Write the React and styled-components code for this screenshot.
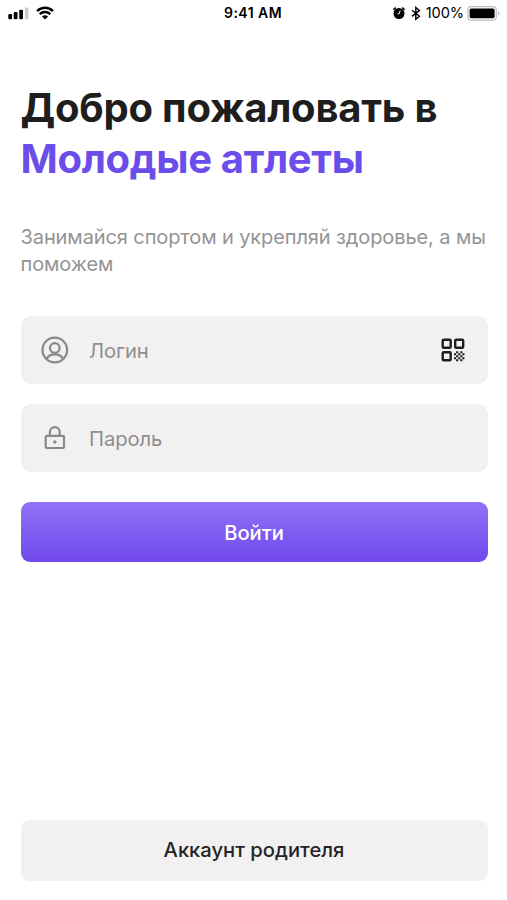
import React from "react";
import styled, { createGlobalStyle } from "styled-components";

const GlobalStyle = createGlobalStyle`
  *, *::before, *::after { box-sizing: border-box; }
  body { margin: 0; background: #fff; }
  button, input { font-family: inherit; }
`;

const Screen = styled.main`
  display: flex;
  flex-direction: column;
  height: 900px;
  padding: 0 19.5px 19.5px 20.5px;
  background: #fff;
  color: #1e1e1e;
  font-family: Inter, "Liberation Sans", sans-serif;
`;

const StatusBar = styled.header`
  display: grid;
  grid-template-columns: 1fr auto 1fr;
  align-items: center;
  height: 26px;
  margin: 0 -12px 0 -13px;
  color: #000;
`;

const StatusGroup = styled.div`
  display: flex;
  align-items: center;
  justify-content: ${(p) => (p.$end ? "flex-end" : "flex-start")};
  gap: ${(p) => p.$gap}px;
  height: 26px;

  svg { flex: none; display: block; }
`;

const Clock = styled.time`
  margin-left: -1px;
  font-size: 14px;
  font-weight: 600;
  line-height: 26px;
  letter-spacing: 0.45px;
`;

const Charge = styled.span`
  margin: 0 -2px 0 0;
  font-size: 14.6px;
  line-height: 26px;
  letter-spacing: -0.1px;
`;

const Title = styled.h1`
  margin: 56px 0 0;
  font-size: 40px;
  font-weight: 700;
  line-height: 51px;
  white-space: nowrap;
`;

const TitleLine = styled.span`
  display: block;
  width: max-content;
  color: ${(p) => (p.$accent ? "#6b4eea" : "#1e1e1e")};
  letter-spacing: ${(p) => p.$tracking};
`;

const Intro = styled.p`
  margin: 40px -10px 0 0;
  color: #949494;
  font-size: 20px;
  line-height: 27px;
  letter-spacing: -0.1px;
`;

const Form = styled.form`
  display: flex;
  flex-direction: column;
  margin-top: 38.4px;
`;

const Field = styled.label`
  display: flex;
  align-items: center;
  height: 68px;
  margin-bottom: 20px;
  padding: 0 22.5px 0 20px;
  border-radius: 10px;
  background: #f2f0f1;
  color: #8a8a8a;

  svg { flex: none; display: block; }
`;

const Input = styled.input`
  flex: 1;
  min-width: 0;
  height: 30px;
  margin-left: 20.5px;
  padding: 0;
  border: 0;
  outline: 0;
  background: transparent;
  color: #1e1e1e;
  font-size: 20.2px;
  letter-spacing: -0.1px;

  &::placeholder { color: #8e8e8e; opacity: 1; }
`;

const ScanButton = styled.button`
  display: block;
  padding: 0;
  border: 0;
  background: none;
  color: #1e1e1e;
`;

const Button = styled.button`
  height: 60.5px;
  padding: 0;
  border: 0;
  border-radius: 9px;
  font-size: 20.2px;
  font-weight: 500;
`;

const PrimaryButton = styled(Button)`
  margin-top: 9.6px;
  background: linear-gradient(#9272f6, #7048ec);
  color: #fff;
  line-height: 61px;
`;

const SecondaryButton = styled(Button)`
  margin-top: auto;
  background: #f2f0f1;
  color: #242424;
  line-height: 60px;
`;

const SignalIcon = () => (
  <svg width="21" height="26" viewBox="0 0 21 26">
    <rect x="0.3" y="14" width="3.8" height="5.3" rx="1.2" />
    <rect x="5.7" y="12" width="3.8" height="7.3" rx="1.2" />
    <rect x="11.2" y="9.7" width="3.8" height="9.6" rx="1.2" />
    <rect x="16.9" y="7.4" width="3.4" height="11.9" rx="1" fill="#cacaca" />
  </svg>
);

const WifiIcon = () => (
  <svg width="18" height="26" viewBox="0 0 18 26" fill="none" stroke="#000" strokeWidth="2.5">
    <path d="M1.1 11.1a11.2 11.2 0 0 1 15.8 0M3.8 14.1a7.4 7.4 0 0 1 10.4 0" />
    <path d="M9 19.4 5.9 16.5a4.4 4.4 0 0 1 6.2 0z" fill="#000" stroke="none" />
  </svg>
);

const AlarmIcon = () => (
  <svg width="14" height="26" viewBox="0 0 14 26">
    <circle cx="6" cy="13.5" r="5.5" />
    <path d="M0.6 10a3.2 3.2 0 0 1 2.3-2.3M11.4 10a3.2 3.2 0 0 0-2.3-2.3" fill="none" stroke="#000" strokeWidth="1.4" />
    <path d="M7.2 10.5 6.2 13.8H4.5" fill="none" stroke="#fff" strokeWidth="1" />
  </svg>
);

const BluetoothIcon = () => (
  <svg width="10" height="26" viewBox="0 0 10 26" fill="none" stroke="#000" strokeWidth="1.4">
    <path d="m1 10.2 7.4 6-3.6 3V7.4l3.6 3-7.4 6" />
  </svg>
);

const BatteryIcon = () => (
  <svg width="33" height="26" viewBox="0 0 33 26">
    <rect x="0.9" y="6.7" width="28.4" height="13.4" rx="3.3" fill="#fff" stroke="#bdbdbd" strokeWidth="1.2" />
    <rect x="2.6" y="8.6" width="25" height="9.6" rx="1.7" />
    <path d="M31 11.2q1.6.7 1.6 2.3T31 15.8z" fill="#bdbdbd" />
  </svg>
);

const UserIcon = () => (
  <svg width="28" height="28" viewBox="0 0 28 28" fill="none" stroke="currentColor" strokeWidth="2.3">
    <circle cx="13.8" cy="14" r="12.3" />
    <circle cx="13.8" cy="12" r="4.8" />
    <path d="M5.5 23.1c1.4-3.1 4.4-4.7 8.3-4.7s6.9 1.6 8.3 4.7" />
  </svg>
);

const LockIcon = () => (
  <svg width="28" height="28" viewBox="0 0 28 28" fill="none" stroke="currentColor" strokeWidth="2.2" strokeLinejoin="round">
    <rect x="4.7" y="11.8" width="18.3" height="12.2" rx="1" />
    <path d="M8.9 11.8V8.1a4.9 4.9 0 0 1 9.8 0v3.7" />
    <circle cx="13.8" cy="17.9" r="1.7" fill="currentColor" stroke="none" />
  </svg>
);

const QrIcon = () => (
  <svg width="24" height="24" viewBox="0 -0.7 24 24">
    <g fill="none" stroke="currentColor" strokeWidth="2.4">
      <rect x="1.7" y="1.1" width="8" height="7.9" rx="1" />
      <rect x="14.2" y="1.1" width="8" height="7.9" rx="1" />
      <rect x="1.7" y="13.6" width="8" height="7.9" rx="1" />
    </g>
    <path
      fill="currentColor"
      d="M15.1 12.5h2.1v2h-2.1zM19.3 12.5h2.1v2h-2.1zM13 14.5h2.1v2H13zM17.2 14.5h2.1v2h-2.1zM21.4 14.5h2v2h-2zM15.1 16.5h2.1v2h-2.1zM19.3 16.5h2.1v2h-2.1zM13 18.5h2.1v2H13zM17.2 18.5h2.1v2h-2.1zM21.4 18.5h2v2h-2zM15.1 20.5h2.1v2h-2.1zM19.3 20.5h2.1v2h-2.1z"
    />
  </svg>
);

export default function App() {
  return (
    <>
      <GlobalStyle />
      <Screen>
        <StatusBar>
          <StatusGroup $gap={7.5}>
            <SignalIcon />
            <WifiIcon />
          </StatusGroup>
          <Clock>9:41 AM</Clock>
          <StatusGroup $end $gap={4.5}>
            <AlarmIcon />
            <BluetoothIcon />
            <Charge>100%</Charge>
            <BatteryIcon />
          </StatusGroup>
        </StatusBar>
        <Title>
          <TitleLine $tracking="-0.22px">Добро пожаловать в</TitleLine>
          <TitleLine $accent $tracking="-0.3px">Молодые атлеты</TitleLine>
        </Title>
        <Intro>
          Занимайся спортом и укрепляй здоровье, а мы
          <br />
          поможем
        </Intro>
        <Form onSubmit={(e) => e.preventDefault()}>
          <Field>
            <UserIcon />
            <Input type="text" placeholder="Логин" aria-label="Логин" />
            <ScanButton type="button">
              <QrIcon />
            </ScanButton>
          </Field>
          <Field>
            <LockIcon />
            <Input type="password" placeholder="Пароль" aria-label="Пароль" />
          </Field>
          <PrimaryButton type="submit">Войти</PrimaryButton>
        </Form>
        <SecondaryButton type="button">Аккаунт родителя</SecondaryButton>
      </Screen>
    </>
  );
}
